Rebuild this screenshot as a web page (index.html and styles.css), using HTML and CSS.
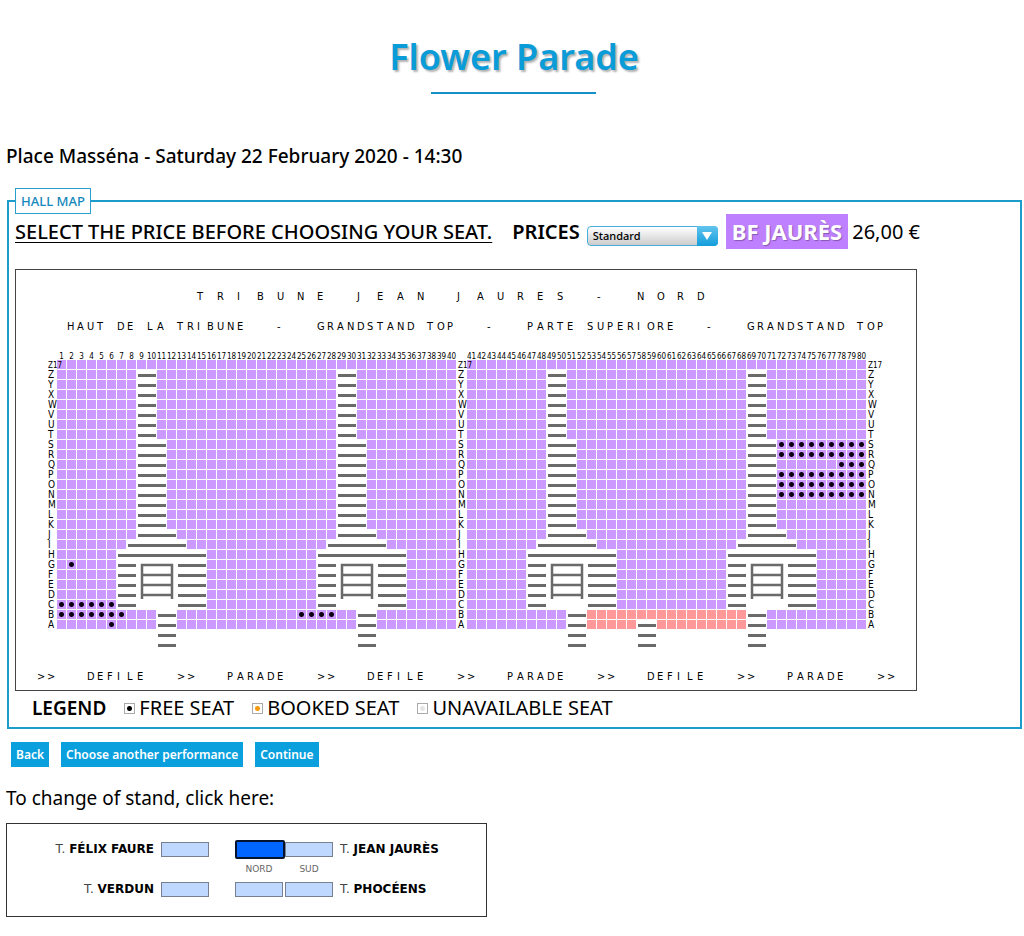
FILE: index.html
```html
<!DOCTYPE html>
<html lang="en">
<head>
<meta charset="utf-8">
<title>Flower Parade</title>
<link rel="stylesheet" href="styles.css">
</head>
<body>
<header class="page-header">
  <h1 class="page-title">Flower Parade</h1>
</header>
<main>
  <h2 class="event">Place Masséna - Saturday 22 February 2020 - 14:30</h2>

  <fieldset class="hall">
    <legend class="hall-legend">HALL MAP</legend>
    <div class="prices">
      <strong class="notice">SELECT THE PRICE BEFORE CHOOSING YOUR SEAT.</strong>
      <label class="prices-label" for="price">PRICES</label>
      <span class="select-box">
        <select id="price" class="select"><option>Standard</option></select>
        <span class="select-arrow"><svg width="10" height="8" viewBox="0 0 10 8" aria-hidden="true"><path d="M0 0h10L5 8z" fill="#fff"/></svg></span>
      </span>
      <span class="zone">BF JAURÈS</span>
      <span class="amount">26,00 €</span>
    </div>

    <div class="plan" id="plan"></div>

    <div class="key">
      <strong class="key-title">LEGEND</strong>
      <span class="key-item"><span class="key-box key-free"></span>FREE SEAT</span>
      <span class="key-item"><span class="key-box key-booked"></span>BOOKED SEAT</span>
      <span class="key-item"><span class="key-box key-none"></span>UNAVAILABLE SEAT</span>
    </div>
  </fieldset>

  <div class="actions">
    <button class="action" type="button">Back</button>
    <button class="action" type="button">Choose another performance</button>
    <button class="action" type="button">Continue</button>
  </div>

  <p class="change">To change of stand, click here:</p>
  <div class="stands">
    <span class="stand-name stand-left">T. <b>FÉLIX FAURE</b></span>
    <button class="stand" type="button" aria-label="Félix Faure"></button>
    <button class="stand stand-current" type="button" aria-label="Jean Jaurès nord"></button>
    <button class="stand" type="button" aria-label="Jean Jaurès sud"></button>
    <span class="stand-name">T. <b>JEAN JAURÈS</b></span>
    <span class="stand-side side-nord">NORD</span>
    <span class="stand-side side-sud">SUD</span>
    <span class="stand-name stand-left stand-second">T. <b>VERDUN</b></span>
    <button class="stand" type="button" aria-label="Verdun"></button>
    <button class="stand" type="button" aria-label="Phocéens nord"></button>
    <button class="stand" type="button" aria-label="Phocéens sud"></button>
    <span class="stand-name">T. <b>PHOCÉENS</b></span>
  </div>
</main>
<script src="plan.js"></script>
</body>
</html>
```

FILE: styles.css
```css
* { box-sizing: border-box; }

body {
  margin: 0;
  padding: 35px 2px 16px 6px;
  font-family: "Noto Sans", sans-serif;
  font-size: 19px;
  line-height: 24px;
  color: #000;
  background: #fff;
}

.page-header {
  display: flex;
  flex-direction: column;
  align-items: center;
  padding-bottom: 50px;
}

.page-title {
  margin: 0;
  font-size: 36px;
  line-height: 44px;
  font-weight: 600;
  color: #0a9bd9;
  text-shadow: 2px 2px 2px rgba(0, 0, 0, 0.3);
}

.page-title::after {
  content: "";
  display: block;
  width: 165px;
  height: 2px;
  margin: 13px auto 0;
  background: #1590c8;
}

.event {
  margin: 0 0 20px;
  font-size: 19px;
  font-weight: 500;
}

.hall {
  min-width: 0;
  margin: 0 0 0 1px;
  padding: 0 6px 7px;
  border: 2px solid #1c9cca;
  font-size: 20px;
}

.hall-legend {
  padding: 0 5px;
  border: 1px solid #2a9fcc;
  font-size: 13px;
  line-height: 24px;
  font-weight: 500;
  color: #1488bb;
}

.prices {
  display: flex;
  align-items: center;
  padding-bottom: 20px;
}

.notice {
  font-weight: 500;
  text-decoration: underline;
  text-decoration-thickness: 1px;
  text-underline-offset: 3px;
}

.prices-label {
  margin: 0 7px 0 20px;
  font-weight: 600;
}

.select-box {
  position: relative;
  display: flex;
  margin: 8px 8px 0 0;
}

.select {
  appearance: none;
  width: 131px;
  height: 20px;
  padding: 0 26px 0 5px;
  border: 1px solid #45aedb;
  border-radius: 4px;
  background: linear-gradient(#fff, #ccc);
  font-family: inherit;
  font-size: 11px;
  font-weight: 500;
  color: #000;
}

.select-arrow {
  position: absolute;
  top: 0;
  right: 0;
  display: flex;
  align-items: center;
  justify-content: center;
  width: 21px;
  height: 20px;
  border-radius: 0 4px 4px 0;
  background: linear-gradient(#62c4ee, #139ddb);
  pointer-events: none;
}

.zone {
  margin-right: 4px;
  padding: 0 6px;
  font-size: 22px;
  line-height: 35px;
  font-weight: 700;
  color: #fff;
  background: #bf80ff;
  text-shadow: 1px 1px 1px rgba(0, 0, 0, 0.3);
}

.plan {
  display: grid;
  grid-template-columns: repeat(90, 10px);
  grid-template-rows: repeat(42, 10px);
  width: max-content;
  border: 1px solid #444;
  font-family: "DejaVu Sans Condensed", "DejaVu Sans", sans-serif;
  font-size: 11px;
  line-height: 13px;
}

.seat {
  margin: 0 0 1px 1px;
  padding: 0;
  border: 0;
  background: #cc99ff;
}

.seat-red { background: #ff9999; }

.seat-free {
  background: radial-gradient(circle, #0b0010 2px, #cc99ff 3px);
  cursor: pointer;
}

.stair {
  align-self: center;
  height: 3px;
  margin-left: 2px;
  background: #6a6a6a;
}

.letter { padding-left: 1px; }
.row-name { padding-left: 2px; font-size: 10px; line-height: 10px; }
.row-name-small, .number { font-size: 8px; }
.row-name-small { line-height: 12px; }
.number { padding-left: 1px; display: flex; justify-content: center; }

.key {
  display: flex;
  align-items: center;
  gap: 18px;
  padding: 5px 0 0 17px;
}

.key-title { font-size: 19px; font-weight: 600; }
.key-item { display: flex; align-items: center; gap: 4px; }

.key-box {
  width: 11px;
  height: 11px;
  border: 1px solid #aaa;
}

.key-free { background: radial-gradient(circle, #000 2px, #fff 3px); }
.key-booked { background: radial-gradient(circle, #f59a0c 2px, #fff 3px); }
.key-none { background: radial-gradient(circle, #e4e4e4 2px, #fff 3px); }

.actions {
  display: flex;
  gap: 12px;
  padding: 13px 5px 19px;
}

.action {
  padding: 0 5px;
  border: 0;
  font-family: inherit;
  font-size: 12px;
  line-height: 25px;
  font-weight: 600;
  color: #fff;
  background: #0aa0de;
}

.change { margin: 0 0 13px; }

.stands {
  display: grid;
  grid-template-columns: 154px 74px 50px 55px auto;
  align-items: center;
  max-width: 481px;
  padding: 15px 0 17px;
  border: 1px solid #333;
  font-family: "DejaVu Sans", sans-serif;
  font-size: 12px;
  line-height: 20px;
}

.stand-name { color: #444; }
.stand-name b { color: #000; }
.stand-left { padding-right: 7px; text-align: right; }

.stand {
  width: 48px;
  height: 15px;
  padding: 0;
  border: 1px solid #777f90;
  background: #bfd8ff;
}

.stand-current {
  width: 50px;
  height: 19px;
  border: 2px solid #05132e;
  border-radius: 2px;
  background: #0066ff;
}

.stand-side {
  width: 48px;
  font-size: 9px;
  text-align: center;
  color: #666;
}

.side-nord { grid-column: 3; }
.side-sud { grid-column: 4; }
.stand-second { grid-column: 1; }
```

FILE: plan.js
```js
const plan = document.getElementById('plan');
const rowNames = ['Z17', ...'ZYXWVUTSRQPONMLKJIHGFEDCBA'];
const firstRow = 9;

function put(tag, cls, row, col, text, span) {
  const el = document.createElement(tag);
  el.className = cls;
  el.style.gridArea = (row + 1) + ' / ' + (col + 1) + (span ? ' / auto / span ' + span : '');
  if (text) el.textContent = text;
  plan.append(el);
  return el;
}

function words(row, col, text, step) {
  [...text].forEach((c, i) => {
    if (c !== ' ') put('span', 'letter', row, col + i * step, c);
  });
}

/* Stairways: [first row, last row, first column, columns] */
const stairs = [[35, 37, 62, 2]];
[0, 20, 41, 61].forEach((dx) => {
  const foot = dx === 61 ? 12 : 14;
  [[10, 16, 12, 2], [17, 25, 12, 3], [26, 26, 12, 4], [27, 27, 11, 6], [28, 28, 10, 9],
    [29, 33, 10, 2], [29, 33, 16, 3], [34, 37, foot, 2]]
    .forEach(([a, b, c, n]) => stairs.push([a, b, c + dx, n]));
});

const blocked = new Set();
stairs.forEach(([a, b, c, n]) => {
  for (let r = a; r <= b; r++) for (let i = 0; i < n; i++) blocked.add(r + ',' + (c + i));
});
[12, 32, 53, 73].forEach((c) => {
  for (let r = 29; r <= 33; r++) for (let i = 0; i < 4; i++) blocked.add(r + ',' + (c + i));
});

/* Free seats: row name -> ranges of plan columns */
const free = {
  S: [[76, 84]], R: [[76, 84]], Q: [[82, 84]], P: [[76, 84]], O: [[76, 84]], N: [[76, 84]],
  G: [[5, 5]], C: [[4, 9]], B: [[4, 10], [28, 31]], A: [[9, 9]]
};

rowNames.forEach((name, i) => {
  const row = firstRow + i;
  for (let col = 4; col <= 84; col++) {
    if (col === 44 || blocked.has(row + ',' + col)) continue;
    if ((free[name] || []).some(([a, b]) => col >= a && col <= b)) {
      const seat = put('button', 'seat seat-free', row, col);
      seat.type = 'button';
      seat.setAttribute('aria-label', 'Seat ' + name + (col < 44 ? col - 3 : col - 4));
    } else {
      put('span', row >= 34 && col >= 57 && col <= 72 ? 'seat seat-red' : 'seat', row, col);
    }
  }
});

stairs.forEach(([a, b, c, n]) => {
  for (let r = a; r <= b; r++) put('span', 'stair', r, c, '', n);
});

[12, 32, 53, 73].forEach((c) => {
  const box = put('span', 'gate', 29, c);
  box.style.gridArea = '30 / ' + (c + 1) + ' / span 4 / span 4';
  box.innerHTML = '<svg width="40" height="40" viewBox="0 0 40 40" fill="none" stroke="#6a6a6a" stroke-width="2.5" aria-hidden="true"><path d="M6 39V5H36V39M6 15H36M6 25H36M6 35H36"/></svg>';
  box.firstChild.style.display = 'block';
});

for (let n = 1; n <= 80; n++) put('span', 'number', 8, n <= 40 ? n + 3 : n + 4, String(n));
rowNames.forEach((name, i) => {
  [3, 44, 85].forEach((col) => put('span', 'row-name' + (i ? '' : ' row-name-small'), firstRow + i, col, name));
});

words(2, 18, 'TRIBUNE JEAN JAURES - NORD', 2);
words(5, 5, 'HAUT DE LA TRIBUNE', 1);
words(5, 26, '-', 1);
words(5, 30, 'GRANDSTAND TOP', 1);
words(5, 47, '-', 1);
words(5, 51, 'PARTE SUPERIORE', 1);
words(5, 69, '-', 1);
words(5, 73, 'GRANDSTAND TOP', 1);
for (let i = 0; i < 7; i++) {
  words(40, 2 + i * 14, '>>', 1);
  if (i < 6) words(40, 7 + i * 14, i % 2 ? 'PARADE' : 'DEFILE', 1);
}
```
